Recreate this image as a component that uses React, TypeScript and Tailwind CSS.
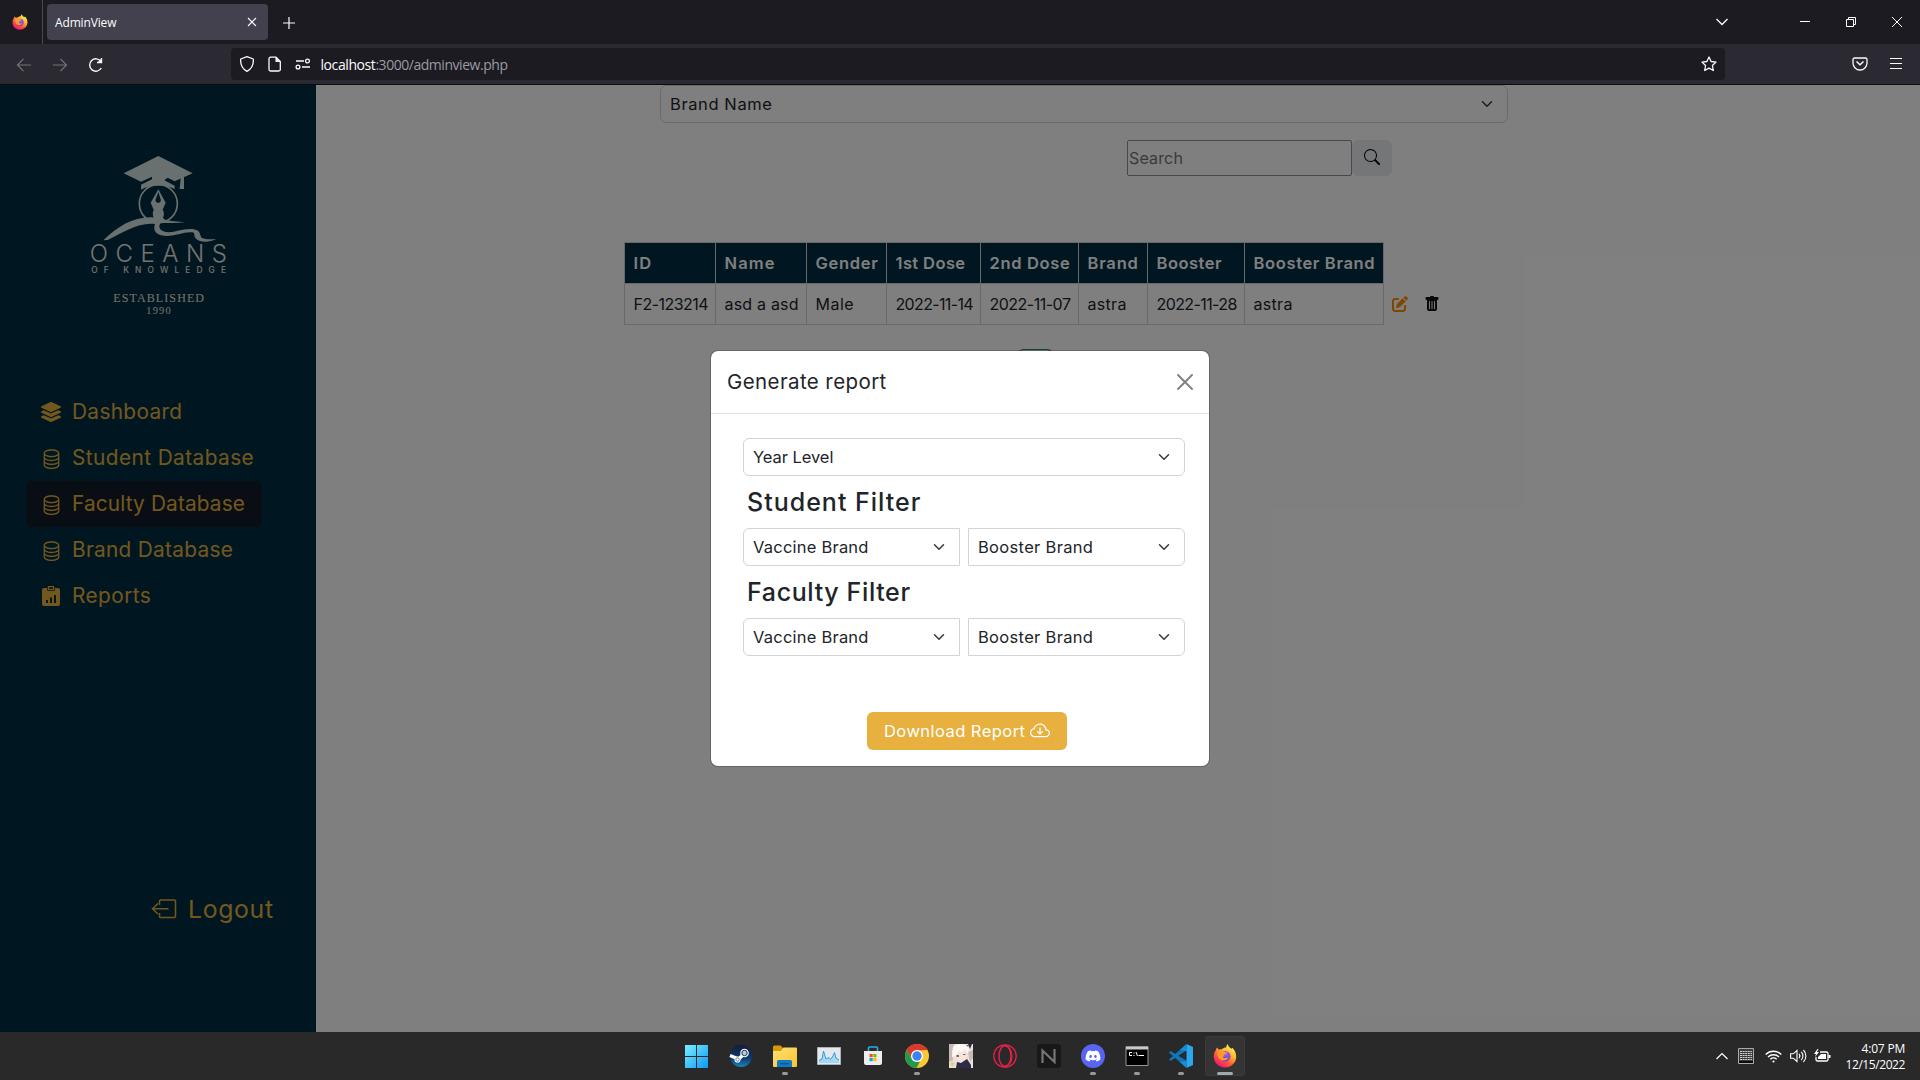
import type { ReactNode } from "react";
import { FaLayerGroup, FaDiscord } from "react-icons/fa";
import { FaPenToSquare } from "react-icons/fa6";
import { BsDatabase, BsCloudArrowDown, BsSearch, BsTrashFill } from "react-icons/bs";

function FirefoxLogo({ size }: { size: number }) {
  return (
    <svg width={size} height={size} viewBox="0 0 24 24">
      <defs>
        <linearGradient id="ffBody" x1="0.8" y1="0.1" x2="0.25" y2="0.95">
          <stop offset="0" stopColor="#fff44f" />
          <stop offset="0.35" stopColor="#ffb02e" />
          <stop offset="0.65" stopColor="#ff5a36" />
          <stop offset="1" stopColor="#f0157a" />
        </linearGradient>
        <radialGradient id="ffGlobe" cx="0.6" cy="0.3" r="0.8">
          <stop offset="0" stopColor="#a45cff" />
          <stop offset="1" stopColor="#4b38b8" />
        </radialGradient>
      </defs>
      <path
        fill="url(#ffBody)"
        d="M4.2 3.6c.6 1 1 1.800 1.700 2.200 1-.5 2-.6 3-.5C10 4 12 3.300 13.400 3.500 13.200 2 13.800.9 14.900.2c.3 2 1.300 2.900 2.800 4 .6-.1.900.4 1.200.9 0-.5.1-1 .4-1.400 2.200 1.800 3.900 5.200 3.900 8.800C23.200 18.800 18.400 23.500 12 23.500S.8 18.800.8 12.600C.8 9.800 1.500 8 2.700 6.500c.2-1.200.7-2.200 1.500-2.900z"
      />
      <circle cx="12.200" cy="12.300" r="5.200" fill="url(#ffGlobe)" />
      <path fill="#ff9a2b" d="M4.500 8.200c2-1.500 4.300-1.600 6.500-.6 1.100.5 2.300.7 3.100.8-.1 1.300-1.600 1.500-2.500 2.100-.9.6-.4 2-2 2.400 1.600 1.900 4.200 1.700 6.100.6-1.500 3.400-6.400 4.200-9.300 1.200C4.500 12.700 4 10.500 4.500 8.200z" />
    </svg>
  );
}

function ReportIcon() {
  return (
    <svg width="18" height="20" viewBox="0 0 18 20" fill="currentColor">
      <path
        fillRule="evenodd"
        d="M2 2h3v1.500A1.500 1.500 0 0 0 6.500 5h5A1.500 1.500 0 0 0 13 3.500V2h3a2 2 0 0 1 2 2v14a2 2 0 0 1-2 2H2a2 2 0 0 1-2-2V4a2 2 0 0 1 2-2zm2 12v3h2v-3zm4-2.500V17h2v-5.500zM12 9v8h2V9z"
      />
      <path fillRule="evenodd" d="M6.500 0h5a.8.8 0 0 1 .8.8v2.600a.8.8 0 0 1-.8.8h-5a.8.8 0 0 1-.8-.8V.8a.8.8 0 0 1 .8-.8zm.6 1.300v1.600h3.800V1.300z" />
    </svg>
  );
}

function CollegeLogo() {
  return (
    <svg width="200" height="200" viewBox="0 0 600 600" fill="#d2e2e0">
      <path d="M191 130 295 78l103 52-54 24-21-11-10 8 31 16v10c-30-14-70-14-101 2v-15l33-16v-8l-33 15z" />
      <path d="M363 134h9v43h-13z" />
      <circle cx="295" cy="221" r="57" fill="none" stroke="#d2e2e0" strokeWidth="5" />
      <path fillRule="evenodd" d="m295 178 22 40-9 21c6 8 4 16 1 25l14 13h-54l12-12c-3-10-4-18 0-26l-9-21zm0 8-8 22a8 8 0 1 0 15 0z" />
      <path d="M130 331c44-42 88-70 145-69l60 11 40 4c-25 3-50 2-73 1-5 8-6 15 1 22 27 18 62-8 98-2 24 4 17 19 24 25 12 6 28 5 43 4-18 10-48 12-60-1-9-9-1-17-11-19-30-4-70 22-103 5-12-7-13-19-9-30-48-6-95 24-142 48z" />
      <g fill="#ece4df">
        <text x="89" y="395" textLength="412" fontSize="72" fontWeight="300" fontFamily="Inter, sans-serif">OCEANS</text>
        <text x="94" y="429" textLength="404" fontSize="25" fontWeight="500" fontFamily="Inter, sans-serif">OF KNOWLEDGE</text>
        <text x="160" y="515" textLength="272" fontSize="36" fontFamily="'Liberation Serif', serif">ESTABLISHED</text>
        <text x="259" y="551" textLength="73" fontSize="31" fontFamily="'Liberation Serif', serif">1990</text>
      </g>
    </svg>
  );
}

function Chevron() {
  return (
    <svg width="12" height="12" viewBox="0 0 16 16" fill="none" stroke="#343a40" strokeWidth="2" strokeLinecap="round" strokeLinejoin="round" className="shrink-0">
      <path d="m2 5 6 6 6-6" />
    </svg>
  );
}

function Select({ label, className }: { label: string; className: string }) {
  return (
    <div className={`flex h-[38px] items-center justify-between border border-[#ced4da] bg-white pr-[14px] pl-[9px] text-[16.5px] text-[#212529] ${className}`}>
      <span>{label}</span>
      <Chevron />
    </div>
  );
}

function BrowserChrome() {
  return (
    <header className="h-[85px] border-b border-[#0c0c0d] bg-[#2b2a33] font-['Open_Sans',sans-serif] text-[#fbfbfe]">
      <div className="flex h-11 items-center bg-[#1c1b22]">
        <div className="flex h-11 w-[43px] items-center border-r border-[#4a4953] pl-3">
          <FirefoxLogo size={16} />
        </div>
        <div className="ml-1 flex h-9 w-[221px] items-center justify-between rounded bg-[#42414d] pr-[11px] pl-2">
          <span className="pt-px text-xs tracking-[-0.15px]">AdminView</span>
          <svg width="10" height="10" viewBox="0 0 10 10" stroke="currentColor" strokeWidth="1.100">
            <path d="m1 1 8 8M9 1 1 9" />
          </svg>
        </div>
        <svg width="12" height="12" viewBox="0 0 12 12" stroke="currentColor" strokeWidth="1.200" className="mt-px ml-[15px]">
          <path d="M6 0v12M0 6h12" />
        </svg>
        <div className="ml-auto flex items-center pr-[18px]">
          <svg width="12" height="8" viewBox="0 0 12 8" fill="none" stroke="currentColor" strokeWidth="1.300" className="mr-[72px]">
            <path d="m.5 1 5.500 5.500L11.500 1" />
          </svg>
          <svg width="10" height="10" viewBox="0 0 10 10" stroke="#fff" className="mr-9">
            <path d="M0 4.500h10" />
          </svg>
          <svg width="10" height="10" viewBox="0 0 10 10" fill="none" stroke="#fff" className="mr-9">
            <path d="M.5 2.500h7v7h-7zM2.500 2.500v-2h7v7h-2" />
          </svg>
          <svg width="10" height="10" viewBox="0 0 10 10" stroke="#fff">
            <path d="m0 0 10 10M10 0 0 10" />
          </svg>
        </div>
      </div>
      <div className="flex h-10 items-center">
        <svg width="102" height="16" viewBox="0 0 102 16" fill="none" stroke="#fbfbfe" strokeWidth="1.400" className="mt-px ml-4">
          <path d="M15 8H1.500M7.500 1.800 1.500 8l6 6.200M37 8h13.500M44.500 1.800l6 6.200-6 6.200" stroke="#737279" strokeWidth="1.200" />
          <path d="M85 4.500A6.200 6.200 0 1 0 85.300 11M85.500 1v4.500H81" />
          <path d="M86 1v5h-5z" fill="#fbfbfe" stroke="none" />
        </svg>
        <div className="ml-[113px] flex h-8 w-[1494px] items-center rounded bg-[#1c1b22] pr-2 pl-2">
          <svg width="72" height="16" viewBox="0 0 72 16" fill="none" stroke="#fbfbfe" strokeWidth="1.300">
            <path d="M8 .7 14.300 3c.4 5-1.300 9.700-6.300 12.300C3 12.700 1.300 8 1.700 3z" strokeLinejoin="round" />
            <path d="M31.500 1.200h5.500L41.300 5.500v8a1.500 1.500 0 0 1-1.500 1.500h-8.300a1.500 1.500 0 0 1-1.500-1.500V2.700a1.500 1.500 0 0 1 1.500-1.500z" />
            <path d="M36.500 1v5h5z" fill="#fbfbfe" stroke="none" />
            <path d="M57 5h8M63 11h8" />
            <circle cx="68.500" cy="5" r="1.900" />
            <circle cx="59" cy="11" r="1.900" />
          </svg>
          <span className="mt-0.5 ml-[9.500px] text-sm tracking-[-0.42px]">localhost</span>
          <span className="mt-0.5 text-sm tracking-[-0.46px] text-[#9b9aa3]">:3000/adminview.php</span>
          <svg width="16" height="16" viewBox="0 0 16 16" fill="none" stroke="#fbfbfe" strokeWidth="1.300" strokeLinejoin="round" className="ml-auto">
            <path d="m8 1 2.100 4.500 4.900.6-3.600 3.400.9 5L8 12.100l-4.300 2.400.9-5L1 6.100l4.900-.6z" />
          </svg>
        </div>
        <svg width="16" height="14" viewBox="0 0 16 14" fill="none" stroke="#fbfbfe" strokeWidth="1.300" className="ml-[127px]">
          <path d="M2.500 1h11A1.500 1.500 0 0 1 15 2.500V6A7 7 0 0 1 1 6V2.500A1.500 1.500 0 0 1 2.500 1z" />
          <path d="M4.500 4.500 8 7.700l3.500-3.200" strokeWidth="1.500" />
        </svg>
        <svg width="12" height="11" viewBox="0 0 12 11" stroke="#fbfbfe" strokeWidth="1.200" className="-mt-px ml-[22px]">
          <path d="M0 .5h12M0 5.500h12M0 10.500h12" />
        </svg>
      </div>
    </header>
  );
}

function NavItem({ icon, label, active }: { icon: ReactNode; label: ReactNode; active?: boolean }) {
  return (
    <div className={`flex h-[46px] w-[236px] items-center rounded-md text-[20.8px] ${active ? "bg-[#101c28]" : ""}`}>
      <span className="ml-[13px] flex w-6 justify-center">{icon}</span>
      <span className="ml-[9px] whitespace-nowrap">{label}</span>
    </div>
  );
}

function Sidebar() {
  return (
    <aside className="flex w-[316px] shrink-0 flex-col bg-[#002e42] text-[#e7b03d]">
      <div className="mt-[45px] ml-[60px]">
        <CollegeLogo />
      </div>
      <nav className="mt-[59px] ml-[26px] flex flex-col">
        <NavItem icon={<FaLayerGroup size={20} />} label={<span className="tracking-[0.35px]">Dashboard</span>} />
        <NavItem icon={<BsDatabase size={21} />} label={<span className="tracking-[0.43px]">Student Database</span>} />
        <NavItem icon={<BsDatabase size={21} />} label={<span className="tracking-[0.15px]">Faculty Database</span>} active />
        <NavItem icon={<BsDatabase size={21} />} label={<span className="tracking-[0.3px]">Brand Database</span>} />
        <NavItem icon={<ReportIcon />} label={<span className="tracking-[0.45px]">Reports</span>} />
      </nav>
      <div className="mt-[273px] ml-[151px] flex h-9 items-center text-[24.8px]">
        <svg width="26" height="20" viewBox="0 0 26 20" fill="none" stroke="currentColor" strokeWidth="1.500" className="-mt-0.5">
          <path d="M8.500 6V2A1 1 0 0 1 9.500 1h14A1 1 0 0 1 24.500 2v15.500a1 1 0 0 1-1 1h-14a1 1 0 0 1-1-1V14M17.500 9.800H1.500M7 4.500 1.500 9.800 7 15" />
        </svg>
        <span className="ml-[11px] tracking-[0.65px]">Logout</span>
      </div>
    </aside>
  );
}

const columns: { head: ReactNode; value: ReactNode }[] = [
  { head: <span className="tracking-[1.2px]">ID</span>, value: <span className="tracking-[-0.53px]">F2-123214</span> },
  { head: <span className="tracking-[1.1px]">Name</span>, value: <span className="tracking-[0.2px]">asd a asd</span> },
  { head: <span className="tracking-[0.7px]">Gender</span>, value: <span className="tracking-[0.5px]">Male</span> },
  { head: <span className="tracking-[0.4px]">1st Dose</span>, value: <span className="tracking-[-0.65px]">2022-11-14</span> },
  { head: <span className="tracking-[0.65px]">2nd Dose</span>, value: <span className="tracking-[-0.5px]">2022-11-07</span> },
  { head: <span className="tracking-[0.8px]">Brand</span>, value: <span className="tracking-[0.3px]">astra</span> },
  { head: <span className="tracking-[0.5px]">Booster</span>, value: <span className="tracking-[-0.6px]">2022-11-28</span> },
  { head: <span className="tracking-[0.65px]">Booster Brand</span>, value: <span className="tracking-[0.3px]">astra</span> },
];

function FacultyTable() {
  return (
    <div className="mt-[66px] ml-[308px] flex items-end">
      <div className="grid w-[760px] grid-cols-[91px_91px_80px_94px_98px_69px_97px_139px] border-t border-r border-[#d0d3d6]">
        {columns.map((c, i) => (
          <div key={i} className="flex h-[41px] items-center border-b border-l border-[#d0d3d6] bg-[#002e42] pl-[8.500px] text-[16.5px] font-semibold whitespace-nowrap text-white">
            {c.head}
          </div>
        ))}
        {columns.map((c, i) => (
          <div key={i} className="flex h-[41px] items-center border-b border-l border-[#d0d3d6] pl-[8.500px] whitespace-nowrap">
            {c.value}
          </div>
        ))}
      </div>
      <div className="flex h-[41px] items-center pb-0.5 pl-2">
        <FaPenToSquare size={16} className="text-[#ff8c00]" />
        <BsTrashFill size={16} className="ml-4 text-[#111]" />
      </div>
    </div>
  );
}

function ReportModal() {
  return (
    <div className="absolute inset-0 flex items-start justify-center bg-black/50 pt-[265px]">
      <div className="h-[417px] w-[500px] rounded-lg border border-black/20 bg-white bg-clip-padding text-[#212529]">
        <div className="flex h-[63px] items-center justify-between border-b border-[#dee2e6] px-4">
          <span className="text-[20.5px] tracking-[0.4px]">Generate report</span>
          <svg width="16" height="16" viewBox="0 0 16 16" stroke="#808080" strokeWidth="1.900" strokeLinecap="round">
            <path d="m1 1 14 14M15 1 1 15" />
          </svg>
        </div>
        <div className="pt-6 pr-6 pl-8">
          <Select label="Year Level" className="rounded-md tracking-[-0.07px]" />
          <h4 className="mt-3 ml-1 text-[25px] leading-[29px] font-medium tracking-[1px]">Student Filter</h4>
          <div className="mt-[11px] grid grid-cols-2 gap-2">
            <Select label="Vaccine Brand" className="rounded-l-md tracking-[0.22px]" />
            <Select label="Booster Brand" className="rounded-r-md tracking-[0.32px]" />
          </div>
          <h4 className="mt-3 ml-1 text-[25px] leading-[29px] font-medium tracking-[0.63px]">Faculty Filter</h4>
          <div className="mt-[11px] grid grid-cols-2 gap-2">
            <Select label="Vaccine Brand" className="rounded-l-md tracking-[0.22px]" />
            <Select label="Booster Brand" className="rounded-r-md tracking-[0.32px]" />
          </div>
        </div>
        <div className="mt-14 ml-[156px] flex h-[38px] w-[200px] items-center rounded-md bg-[#e8b03e] pl-[17px] text-white">
          <span className="text-[16.5px] whitespace-nowrap tracking-[0.45px]">Download Report</span>
          <BsCloudArrowDown size={20} className="ml-[5px]" />
        </div>
      </div>
    </div>
  );
}

function TaskIcon({ children, mark }: { children: ReactNode; mark?: boolean }) {
  return (
    <div className="flex h-12 w-11 flex-col items-center pt-3">
      <div className="flex h-6 items-center">{children}</div>
      {mark && <div className="mt-1 h-[3px] w-1.5 rounded-full bg-[#9a9a9a]" />}
    </div>
  );
}

function Taskbar() {
  return (
    <footer className="flex h-12 items-center bg-[#292929] font-['Open_Sans',sans-serif] text-white">
      <div className="ml-[675px] flex">
        <TaskIcon>
          <svg width="24" height="24" viewBox="0 0 24 24">
            <defs>
              <linearGradient id="win" x1="0" y1="0" x2="24" y2="24" gradientUnits="userSpaceOnUse">
                <stop stopColor="#7df0ff" />
                <stop offset="1" stopColor="#0a97f5" />
              </linearGradient>
            </defs>
            <path fill="url(#win)" d="M0 1h11v11H0zm12 0h11v11H12zM0 13h11v11H0zm12 0h11v11H12z" />
          </svg>
        </TaskIcon>
        <TaskIcon>
          <svg width="24" height="24" viewBox="0 0 24 24">
            <defs>
              <linearGradient id="steam" x1="0" y1="0" x2="0" y2="1">
                <stop stopColor="#101c3c" />
                <stop offset="0.600" stopColor="#0d3a70" />
                <stop offset="1" stopColor="#1a86be" />
              </linearGradient>
            </defs>
            <circle cx="12" cy="12" r="11" fill="url(#steam)" />
            <path d="M1 11.500 9.500 15l4.500-4" stroke="#fff" strokeWidth="3.500" fill="none" />
            <circle cx="15.500" cy="9" r="4.300" fill="#fff" />
            <circle cx="15.500" cy="9" r="2.700" fill="#c5c9d2" stroke="#173159" />
            <circle cx="8.500" cy="15.500" r="3.100" fill="#fff" />
            <circle cx="8.500" cy="15.500" r="1.700" fill="none" stroke="#385176" strokeWidth=".7" />
          </svg>
        </TaskIcon>
        <TaskIcon mark>
          <svg width="24" height="24" viewBox="0 0 24 24">
            <defs>
              <linearGradient id="folder" x1="0" y1="0" x2="1" y2="1">
                <stop stopColor="#ffe07a" />
                <stop offset="1" stopColor="#fcc32c" />
              </linearGradient>
            </defs>
            <path fill="#d99a09" d="M0 3a1.500 1.500 0 0 1 1.500-1.500h6L10 4v3H0z" />
            <path fill="url(#folder)" d="M0 7h8l2.500-3.500H23a1 1 0 0 1 1 1V22a1 1 0 0 1-1 1H1a1 1 0 0 1-1-1z" />
            <path fill="#1278c8" d="M4 23v-5.500A1.500 1.500 0 0 1 5.500 16h12a1.500 1.500 0 0 1 1.500 1.500V23z" />
            <path fill="#0a589e" d="M7 19h9v1.300H7z" />
          </svg>
        </TaskIcon>
        <TaskIcon>
          <svg width="24" height="18" viewBox="0 0 24 18">
            <path fill="#e4e9ec" stroke="#aab3b9" d="M.5.500h23v17H.5z" />
            <path fill="#a6d8f3" d="M2 13.500 5 12l1.500-8L9 12l3-1.500 1.500 2L16 9l1.500-3.500L19 11l3 2v3H2z" />
            <path fill="none" stroke="#3b9ad0" d="M2 13.500 5 12l1.500-8L9 12l3-1.500 1.500 2L16 9l1.500-3.500L19 11l3 2" />
          </svg>
        </TaskIcon>
        <TaskIcon>
          <svg width="20" height="20" viewBox="0 0 20 20">
            <path d="M5.500 5V2a1 1 0 0 1 1-1h7a1 1 0 0 1 1 1v3" fill="none" stroke="#29abe6" strokeWidth="1.600" />
            <path fill="#eeeeee" d="M1 5h18v12a2 2 0 0 1-2 2H3a2 2 0 0 1-2-2z" />
            <path fill="#f25022" d="M6.500 8h3.200v3.200H6.500z" />
            <path fill="#7fba00" d="M10.300 8h3.200v3.200h-3.200z" />
            <path fill="#00a4ef" d="M6.500 12h3.200v3.200H6.500z" />
            <path fill="#ffb900" d="M10.300 12h3.200v3.200h-3.200z" />
          </svg>
        </TaskIcon>
        <TaskIcon mark>
          <svg width="24" height="24" viewBox="0 0 24 24">
            <circle cx="12" cy="12" r="12" fill="#fcc934" />
            <path fill="#d93a2c" d="M1.600 6A12 12 0 0 1 22.400 6L12 6.500l-5.200 8.500z" />
            <path fill="#229a4c" d="M1.600 6 6.800 15l5.200 3 3-.6L11.500 24A12 12 0 0 1 1.600 6z" />
            <circle cx="12" cy="12" r="6" fill="#fff" />
            <circle cx="12" cy="12" r="4.700" fill="#3b82f0" />
          </svg>
        </TaskIcon>
        <TaskIcon>
          <svg width="24" height="24" viewBox="0 0 24 24">
            <path fill="#e9e2dc" d="M0 0h24v24H0z" />
            <path fill="#c8b9b5" d="M0 0h5L3 8l1 8-4 2zM19 8l2 10 3-4V6z" />
            <path fill="#fbe3d6" d="M6 6c3-2 10-2 12 1l-1 8-5 3-6-4z" />
            <path fill="#fffaf7" d="M4 3c5-4 12-4 16 1l-1 6-3-5-4 4-1-3-5 6-3 1z" />
            <path fill="#2d2b49" d="M8 18l4 1 6-4 4 6v3H7zM19 0h4l-2 5z" />
            <path fill="#5b6b9a" d="M7.500 11H10v2H7.500zM14 10h2.500v1H14zM17 1h3l-1 2z" />
            <path fill="#e2cf84" d="m3 17 1.500 2 2 .5-2 1.500L4 23l-2-2-2-1 2-1z" />
          </svg>
        </TaskIcon>
        <TaskIcon>
          <svg width="24" height="24" viewBox="0 0 24 24" fill="none" stroke="#e0214a">
            <circle cx="12" cy="12" r="11.200" strokeWidth="1.300" />
            <ellipse cx="12" cy="12" rx="6" ry="10.500" strokeWidth="1.500" />
            <path d="M9 2c7-1 10 4 10 10S16 23 9 22" strokeWidth="1.200" />
          </svg>
        </TaskIcon>
        <TaskIcon>
          <svg width="24" height="24" viewBox="0 0 24 24">
            <rect width="24" height="24" rx="3" fill="#181818" />
            <path d="M5.500 19V6.500L17.500 18V5" fill="none" stroke="#777" strokeWidth="2.200" />
          </svg>
        </TaskIcon>
        <TaskIcon mark>
          <div className="flex size-6 items-center justify-center rounded-full bg-[#5865f2]">
            <FaDiscord size={16} />
          </div>
        </TaskIcon>
        <TaskIcon mark>
          <svg width="24" height="20" viewBox="0 0 24 20">
            <path fill="#000" stroke="#969696" d="M1 .5h22v19H1z" />
            <path fill="#c9c9c9" d="M1 1h22v2.500H1z" />
            <path fill="none" stroke="#fff" d="M7 6.500H4.500v3H7M9 6.500v1M9 9v1M11 6l1.500 4M13.500 9.500H19" />
          </svg>
        </TaskIcon>
        <TaskIcon mark>
          <svg width="24" height="24" viewBox="0 0 24 24">
            <path fill="#0e76bc" d="M1.500 7 0 8.500l17 15 1-6.500zM0 15.500 1.500 17 18 6 17 .5z" />
            <path fill="#2ba7f0" d="M17.500 0 24 3v18l-6.500 3z" />
            <path fill="#1b8dd6" d="M17 .5 11 6l7 1zM17 23.500 11 18l7-1z" />
          </svg>
        </TaskIcon>
        <div className="mt-1 ml-0.5 flex size-10 flex-col items-center rounded bg-[#343434] pt-2 ring-1 ring-[#3b3b3b] ring-inset">
          <FirefoxLogo size={24} />
          <div className="mt-1 h-[3px] w-4 shrink-0 rounded-full bg-[#9fabad]" />
        </div>
      </div>
      <div className="ml-auto flex items-center pr-[15px]">
        <svg width="12" height="8" viewBox="0 0 12 8" fill="none" stroke="#fff" strokeWidth="1.200" className="mr-[10px]">
          <path d="m.5 7 5.500-5.500L11.500 7" />
        </svg>
        <svg width="16" height="16" viewBox="0 0 16 16" className="mr-[11px]">
          <path fill="#3a3a3a" stroke="#aaa" d="M.5.500h15v15H.5z" />
          <path stroke="#cfcfcf" strokeDasharray="2 .6" d="M2 3.500h12M2 5.500h12M2 7.500h12M2 9.500h12M2 11.500h12" />
          <path fill="#0c0c0c" d="M1 13h14v2H1z" />
        </svg>
        <svg width="17" height="13" viewBox="0 0 17 13" fill="none" stroke="#fff" strokeWidth="1.300" className="mr-2">
          <path d="M.7 4.500a11 11 0 0 1 15.600 0M3 7a7.800 7.800 0 0 1 11 0M5.300 9.300a4.600 4.600 0 0 1 6.400 0" />
          <circle cx="8.500" cy="11.500" r="1.100" fill="#fff" stroke="none" />
        </svg>
        <svg width="17" height="14" viewBox="0 0 17 14" fill="none" stroke="#fff" strokeWidth="1.100" className="mr-[7px]">
          <path d="M.6 4.800h2.700L7 1.500v11L3.300 9.200H.6zM9 4.800a3.500 3.500 0 0 1 0 4.400M11.200 2.800a6 6 0 0 1 0 8.400M13.400 1a8.500 8.500 0 0 1 0 12" />
        </svg>
        <svg width="17" height="14" viewBox="0 0 17 14" className="mr-[15px]">
          <path fill="none" stroke="#fff" strokeWidth="1.300" d="M6 3h6.500A1.500 1.500 0 0 1 14 4.500v6a1.500 1.500 0 0 1-1.500 1.500h-9A1.500 1.500 0 0 1 2 10.500V8" />
          <path fill="#fff" d="M14.500 6h2v3h-2zM4 8l3-3h5v5H4zM3.500 0 0 5h2L1 8l4-5H3l1.500-3z" />
        </svg>
        <div className="flex flex-col items-end pt-px text-xs leading-4">
          <span className="tracking-[-0.2px]">4:07 PM</span>
          <span className="tracking-[-0.42px]">12/15/2022</span>
        </div>
      </div>
    </footer>
  );
}

export default function App() {
  return (
    <div className="flex h-[1080px] w-[1920px] flex-col overflow-hidden">
      <BrowserChrome />
      <div className="relative flex h-[947px] bg-white font-[Inter,sans-serif] text-base text-[#212529]">
        <Sidebar />
        <main className="flex-1">
          <Select label="Brand Name" className="ml-[344px] w-[848px] rounded-md tracking-[0.6px]" />
          <div className="mt-[17px] ml-[811px] flex">
            <div className="flex h-9 w-[225px] items-center rounded-[2px] border border-[#8f8f9d] pb-px pl-px tracking-[0.15px] text-[#757575]">Search</div>
            <div className="flex h-9 w-10 items-center justify-center rounded-md bg-[#e9ecef] pb-0.5 text-black">
              <BsSearch size={16} />
            </div>
          </div>
          <FacultyTable />
          <div className="mt-6 ml-[703px] h-9 w-[33px] rounded border border-[#198754]" />
        </main>
        <ReportModal />
      </div>
      <Taskbar />
    </div>
  );
}
